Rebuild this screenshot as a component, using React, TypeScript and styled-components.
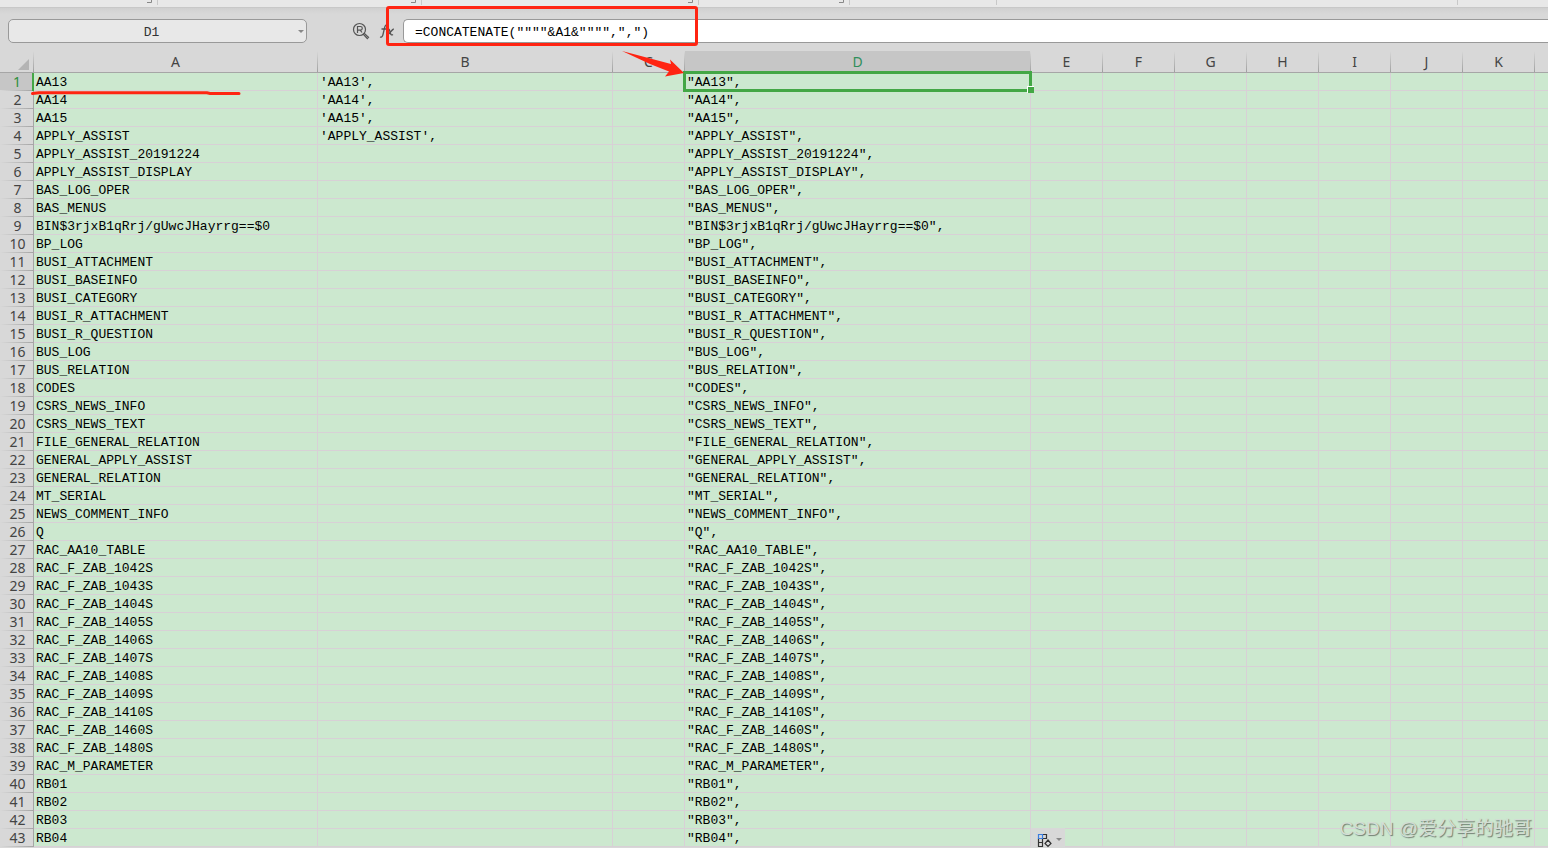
import React from "react";
import styled, { createGlobalStyle, css } from "styled-components";

const GREEN = "#43a745";
const RED = "#ff2412";
const MONO = '"Liberation Mono", "Noto Sans CJK SC", monospace';

const GlobalStyle = createGlobalStyle`
  * { box-sizing: border-box; }
  html, body, #root { height: 100%; }
  body { margin: 0; overflow: hidden; background: #d8d8d8; font-family: "Noto Sans", sans-serif; }
`;

const Page = styled.main`
  position: relative;
  display: flex;
  flex-direction: column;
  height: 100vh;
  overflow: hidden;
`;

const Ribbon = styled.div`
  flex: none;
  height: 8px;
  background: #e8e8e8;
  border-bottom: 1px solid #c8c8c8;
`;

const RibbonMarks = styled.svg`
  display: block;
`;

const FormulaBar = styled.div`
  flex: none;
  display: flex;
  align-items: center;
  height: 43px;
  padding: 3px 0 0 8px;
  background: linear-gradient(#d0d0d0, #d8d8d8 6px);
`;

const NameBox = styled.label`
  position: relative;
  width: 299px;
  height: 24px;
`;

const NameInput = styled.input`
  display: block;
  width: 100%;
  height: 24px;
  padding: 2px 12px 0 0;
  border: 1px solid #999;
  border-radius: 5px;
  background: #e8e8e8;
  color: #333;
  font: 13px ${MONO};
  text-align: center;
`;

const Caret = styled.span`
  position: absolute;
  right: 3px;
  top: 11px;
  border: 3px solid transparent;
  border-top-color: #888;
  border-bottom: 0;
`;

const Tools = styled.div`
  display: flex;
  align-items: center;
  gap: 9px;
  width: 96px;
  padding-left: 45px;
`;

const ToolButton = styled.button`
  display: flex;
  padding: 0;
  border: 0;
  background: none;
  color: #555;
`;

const FormulaBox = styled.label`
  position: relative;
  flex: 1;
  height: 24px;
`;

const FormulaInput = styled.input`
  display: block;
  width: 100%;
  height: 24px;
  padding: 2px 0 0 11px;
  border: 1px solid #999;
  border-right: 0;
  border-radius: 5px 0 0 5px;
  background: #fff;
  color: #000;
  font: 13px ${MONO};
`;

const FormulaFrame = styled.span`
  position: absolute;
  left: -17px;
  top: -13px;
  width: 312px;
  height: 40px;
  border: 3px solid ${RED};
  border-radius: 3px;
  pointer-events: none;
`;

const Sheet = styled.table`
  flex: none;
  width: 100%;
  table-layout: fixed;
  border-collapse: separate;
  border-spacing: 0;
  background: #cce8cf;
`;

const Column = styled.col<{ $width?: number }>`
  ${(p) => p.$width && css`width: ${p.$width}px;`}
`;

const ColumnHead = styled.th<{ $active?: boolean }>`
  height: 22px;
  padding: 0 1px 0 0;
  border-bottom: 1px solid #a6a6a6;
  background:
    linear-gradient(#d8d8d8, #a0a0a0) right / 1px 100% no-repeat,
    ${(p) => (p.$active ? "#c6c6c6" : "#d8d8d8")};
  color: ${(p) => (p.$active ? "#2f8f5b" : "#444")};
  font-size: 14px;
  font-weight: 400;
  line-height: 21px;

  &:last-child {
    background: #d8d8d8;
  }
`;

const Corner = styled(ColumnHead)`
  text-align: right;
`;

const CornerMark = styled.svg`
  display: block;
  margin: 5px 4px 0 auto;
`;

const RowHead = styled.th<{ $active?: boolean }>`
  height: 18px;
  padding: 0 0 0 2px;
  border-right: ${(p) => (p.$active ? `2px solid ${GREEN}` : "1px solid #a6a6a6")};
  background:
    linear-gradient(90deg, #d8d8d8, #a6a6a6) bottom / 100% 1px no-repeat,
    ${(p) => (p.$active ? "#c6c6c6" : "#d8d8d8")};
  color: ${(p) => (p.$active ? "#2f8f3b" : "#444")};
  font-size: 14px;
  font-weight: 400;
  line-height: 16px;
`;

const Cell = styled.td<{ $selected?: boolean }>`
  height: 18px;
  padding: 3px 0 0 2px;
  border-right: 1px solid #d8d0d6;
  border-bottom: 1px solid #d8d0d6;
  color: #000;
  font: 13px/14px ${MONO};
  vertical-align: bottom;
  white-space: pre;

  &:last-child {
    border-right: 0;
  }

  ${(p) =>
    p.$selected &&
    css`
      position: relative;
      z-index: 1;
      &::before {
        content: "";
        position: absolute;
        inset: -2px -2px -2px -2px;
        border: 3px solid ${GREEN};
      }
      &::after {
        content: "";
        position: absolute;
        right: -4px;
        bottom: -3px;
        width: 6px;
        height: 6px;
        border: 1px solid #fff;
        border-right: 0;
        border-bottom: 0;
        background: ${GREEN};
      }
    `}
`;

const Drawing = styled.svg<{ $left: number; $top: number }>`
  position: absolute;
  left: ${(p) => p.$left}px;
  top: ${(p) => p.$top}px;
  z-index: 2;
  overflow: visible;
  pointer-events: none;
`;

const FillOptions = styled.button`
  position: absolute;
  left: 1031px;
  top: 828px;
  display: flex;
  align-items: center;
  gap: 4px;
  width: 34px;
  height: 24px;
  padding: 0 0 0 6px;
  border: 0;
  background: #d8d8d8;
`;

const Watermark = styled.div`
  position: absolute;
  right: 16px;
  bottom: 5px;
  color: #d3ddd4;
  font: 19px/28px "Liberation Sans", "Noto Sans CJK SC", sans-serif;
  text-shadow: 1px 1px 1px #6f7d71;
  white-space: nowrap;
`;

const names = [
  "AA13", "AA14", "AA15", "APPLY_ASSIST", "APPLY_ASSIST_20191224",
  "APPLY_ASSIST_DISPLAY", "BAS_LOG_OPER", "BAS_MENUS",
  "BIN$3rjxB1qRrj/gUwcJHayrrg==$0", "BP_LOG", "BUSI_ATTACHMENT",
  "BUSI_BASEINFO", "BUSI_CATEGORY", "BUSI_R_ATTACHMENT", "BUSI_R_QUESTION",
  "BUS_LOG", "BUS_RELATION", "CODES", "CSRS_NEWS_INFO", "CSRS_NEWS_TEXT",
  "FILE_GENERAL_RELATION", "GENERAL_APPLY_ASSIST", "GENERAL_RELATION",
  "MT_SERIAL", "NEWS_COMMENT_INFO", "Q", "RAC_AA10_TABLE",
  "RAC_F_ZAB_1042S", "RAC_F_ZAB_1043S", "RAC_F_ZAB_1404S",
  "RAC_F_ZAB_1405S", "RAC_F_ZAB_1406S", "RAC_F_ZAB_1407S",
  "RAC_F_ZAB_1408S", "RAC_F_ZAB_1409S", "RAC_F_ZAB_1410S",
  "RAC_F_ZAB_1460S", "RAC_F_ZAB_1480S", "RAC_M_PARAMETER",
  "RB01", "RB02", "RB03", "RB04",
];

const columns: { name: string; width?: number }[] = [
  { name: "A", width: 284 },
  { name: "B", width: 295 },
  { name: "C", width: 72 },
  { name: "D", width: 346 },
  ...["E", "F", "G", "H", "I", "J", "K"].map((name) => ({ name, width: 72 })),
  { name: "" },
];

function cellText(column: string, row: number) {
  if (column === "A") return names[row];
  if (column === "B" && row < 4) return `'${names[row]}',`;
  if (column === "D") return `"${names[row]}",`;
  return "";
}

export default function App() {
  return (
    <Page>
      <GlobalStyle />
      <Ribbon>
        <RibbonMarks width="1460" height="5" fill="none" stroke="#888">
          <path d="M147 2.500h4.500V0M411 2.500h4.500V0M688 2.500h4.500V0M839 2.500h4.500V0" />
          <path stroke="#c8c8c8" d="M157.500 0v5M421.500 0v5M698.500 0v5M849.500 0v5M996.500 0v5M1457.500 0v5" />
        </RibbonMarks>
      </Ribbon>
      <FormulaBar>
        <NameBox>
          <NameInput aria-label="Name box" defaultValue="D1" />
          <Caret />
        </NameBox>
        <Tools>
          <ToolButton aria-label="Find">
            <svg width="18" height="18" viewBox="0 0 18 18" fill="none" stroke="#555" strokeWidth="1.200">
              <circle cx="7.500" cy="7.500" r="6" />
              <path d="M5.500 11V4.500h3a1.800 1.800 0 0 1 0 3.600h-3M8.200 8.100l1.800 2.400" />
              <path d="M11.500 12.500l1-1 4 3.700-1.200 1.300z" />
            </svg>
          </ToolButton>
          <ToolButton aria-label="Insert function">
            <svg width="16" height="16" viewBox="0 0 16 16" fill="none" stroke="#555" strokeWidth="1.300">
              <path d="M8.500 2C6.500 1.500 6 3 5.500 5L4 11.500C3.500 13.500 2.500 14.500 1 14M2.500 6h5M8.500 6.200c2-.8 2 1.300 2.700 3.500.6 2 1.300 2.800 2.800 1.800M14.800 6c-2 .2-4.300 5.500-6.800 6" />
            </svg>
          </ToolButton>
        </Tools>
        <FormulaBox>
          <FormulaInput aria-label="Formula" defaultValue={'=CONCATENATE(""""&A1&"""",",")'} />
          <FormulaFrame />
        </FormulaBox>
      </FormulaBar>
      <Sheet>
        <colgroup>
          <Column $width={34} />
          {columns.map((c) => <Column key={c.name} $width={c.width} />)}
        </colgroup>
        <thead>
          <tr>
            <Corner>
              <CornerMark width="11" height="11"><path d="M11 0v11H0z" fill="#b4b4b4" /></CornerMark>
            </Corner>
            {columns.map((c) => (
              <ColumnHead key={c.name} scope="col" $active={c.name === "D"}>{c.name}</ColumnHead>
            ))}
          </tr>
        </thead>
        <tbody>
          {names.map((name, row) => (
            <tr key={name}>
              <RowHead scope="row" $active={row === 0}>{row + 1}</RowHead>
              {columns.map((c) => (
                <Cell key={c.name} $selected={c.name === "D" && row === 0}>{cellText(c.name, row)}</Cell>
              ))}
            </tr>
          ))}
        </tbody>
      </Sheet>
      <Drawing $left={31} $top={90} width="212" height="6" fill="none" stroke={RED} strokeWidth="3" strokeLinecap="round">
        <path d="M1.500 3.500L8 2.800H176L179 3.500H208" />
      </Drawing>
      <Drawing $left={621} $top={50} width="64" height="28" fill={RED}>
        <path d="M1 1L50 14 49 9.500 63 23 44 26.500 48 21.500 29 14z" />
      </Drawing>
      <FillOptions aria-label="Auto fill options">
        <svg width="15" height="15" viewBox="0 0 15 15" fill="none" stroke="#333" strokeWidth="1.200">
          <path d="M5.500 1.500h4v4h-4M1.500 5.500v8h4v-8M1.500 9.500h4M11 7l3 3.500-3 3-3-3z" />
          <path stroke="#3b7de0" d="M1.500 1.500h4v4h-4z" />
        </svg>
        <svg width="6" height="4"><path d="M0 0h6L3 3z" fill="#888" /></svg>
      </FillOptions>
      <Watermark>CSDN @爱分享的驰哥</Watermark>
    </Page>
  );
}
